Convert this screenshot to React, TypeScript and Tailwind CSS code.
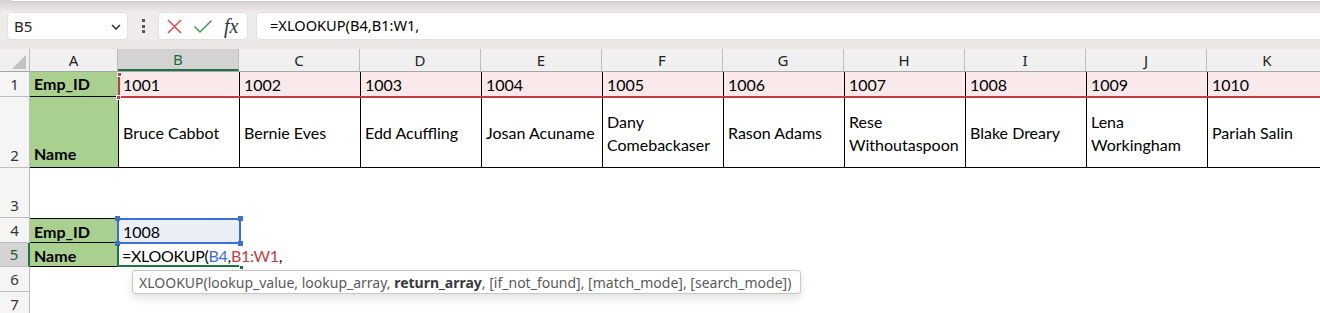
import React from 'react';

const COLS = ['B', 'C', 'D', 'E', 'F', 'G', 'H', 'I', 'J', 'K'];
const IDS = ['1001', '1002', '1003', '1004', '1005', '1006', '1007', '1008', '1009', '1010'];
const NAMES = [
  'Bruce Cabbot',
  'Bernie Eves',
  'Edd Acuffling',
  'Josan Acuname',
  'Dany Comebackaser',
  'Rason Adams',
  'Rese Withoutaspoon',
  'Blake Dreary',
  'Lena Workingham',
  'Pariah Salin',
];

const cellFont = "font-['Lato'] text-[16px] text-black";
const uiFont = "font-['Noto_Sans']";

function RowHead({ n, selected }: { n: number; selected?: boolean }) {
  return (
    <div
      className={`w-[30px] shrink-0 flex items-end justify-center pb-[1px] border-b border-r border-[#bdbdbd] ${uiFont} text-[15px] ${
        selected ? 'bg-[#d4d4d4] text-[#1e5e37] border-r-2 border-r-[#217346]' : 'bg-[#f5f5f5] text-[#333]'
      }`}
    >
      {n}
    </div>
  );
}

function Handle({ className }: { className: string }) {
  return <div className={`absolute w-[5px] h-[5px] ${className}`} />;
}

function FormulaBar() {
  return (
    <div className="flex items-stretch h-[29px] bg-[#efebeb] pt-[1px]">
      <div className={`ml-[7px] w-[121px] bg-white rounded-[4px] border border-[#e4e0e0] flex items-center justify-between pl-[6px] pr-[6px] ${uiFont} text-[15px] text-[#222]`}>
        <span>B5</span>
        <svg width="10" height="6" viewBox="0 0 10 6" className="mt-[2px]">
          <path d="M1 1l4 4 4-4" fill="none" stroke="#333" strokeWidth="1.6" />
        </svg>
      </div>
      <div className="w-[30px] flex flex-col items-center justify-center gap-[2.5px]">
        <span className="w-[3px] h-[3px] bg-[#555]" />
        <span className="w-[3px] h-[3px] bg-[#555]" />
        <span className="w-[3px] h-[3px] bg-[#555]" />
      </div>
      <div className="w-[90px] bg-white rounded-[4px] border border-[#e4e0e0] flex items-center pl-[7px] gap-[10px]">
        <svg width="17" height="17" viewBox="0 0 17 17">
          <path d="M2 2l13 13M15 2L2 15" stroke="#e5484d" strokeWidth="1.5" />
        </svg>
        <svg width="20" height="16" viewBox="0 0 20 16">
          <path d="M1.5 8.5l5.5 5.5L18.5 2.5" fill="none" stroke="#3f9a55" strokeWidth="1.5" />
        </svg>
        <span className="font-['Liberation_Serif'] italic text-[20px] leading-none text-[#333] ml-[1px]">fx</span>
      </div>
      <div className={`ml-[8px] flex-1 bg-white rounded-l-[4px] border border-r-0 border-[#e4e0e0] flex items-center pl-[13px] ${uiFont} text-[14.6px] text-black`}>
        =XLOOKUP(B4,B1:W1,
      </div>
    </div>
  );
}

function ColumnHeaders() {
  return (
    <div className={`flex h-[23px] bg-[#f0f0f0] border-b border-[#a6a6a6] ${uiFont} text-[15px] text-[#222]`}>
      <div className="w-[30px] shrink-0 relative border-r border-[#bdbdbd]">
        <svg width="14" height="14" viewBox="0 0 14 14" className="absolute right-[3px] bottom-[2px]">
          <path d="M14 0V14H0Z" fill="#c2c2c2" />
        </svg>
      </div>
      <div className="w-[88px] shrink-0 flex items-center justify-center border-r border-[#bdbdbd]">A</div>
      {COLS.map((c) => (
        <div
          key={c}
          className={`w-[121px] shrink-0 flex items-center justify-center border-r border-[#bdbdbd] ${
            c === 'B' ? 'bg-[#d3d3d3] text-[#1e6b3c] border-b-2 border-b-[#217346]' : ''
          }`}
        >
          {c}
        </div>
      ))}
    </div>
  );
}

export default function App() {
  return (
    <div className="w-[1320px] h-[313px] overflow-hidden relative bg-white">
      <div className="h-[11px] bg-gradient-to-b from-[#d6d1d1] to-[#ebe7e7]">
        <div className="ml-[11px] h-[2px] bg-white border-b border-[#cfcaca] rounded-bl-[3px]" />
      </div>
      <FormulaBar />
      <div className="h-[9px] bg-[#ebe6e6]" />
      <ColumnHeaders />

      {/* row 1 */}
      <div className="flex h-[25px]">
        <RowHead n={1} />
        <div className={`w-[88px] shrink-0 bg-[#a9d08e] border-b border-black flex items-end pl-[4px] font-bold ${cellFont}`}>
          Emp_ID
        </div>
        {IDS.map((id, i) => (
          <div
            key={id}
            className={`w-[121px] shrink-0 relative bg-[#f9e9ea] border-l border-black flex items-end pl-[4px] ${cellFont}`}
          >
            {id}
            <div className="absolute left-[-1px] right-[-1px] bottom-[-1px] h-[2px] bg-[#c23b45]" />
            {i === 0 && (
              <>
                <div className="absolute left-[-1px] top-0 bottom-[-1px] w-[2px] bg-[#c23b45]" />
                <Handle className="left-[-2px] top-0 h-[4px] bg-[#c23b45] border border-white" />
                <Handle className="left-[-3px] bottom-[-3px] bg-[#c23b45] border border-white" />
              </>
            )}
          </div>
        ))}
      </div>

      {/* row 2 */}
      <div className="flex h-[71px]">
        <RowHead n={2} />
        <div className={`w-[88px] shrink-0 bg-[#a9d08e] border-b border-black flex items-end pb-[1px] pl-[4px] font-bold ${cellFont}`}>
          Name
        </div>
        {NAMES.map((name) => (
          <div
            key={name}
            className={`w-[121px] shrink-0 border-l border-b border-black flex items-center pl-[4px] pr-[2px] pt-[1px] leading-[23px] ${cellFont}`}
          >
            {name}
          </div>
        ))}
      </div>

      {/* row 3 */}
      <div className="flex h-[50px]">
        <RowHead n={3} />
      </div>

      {/* row 4 */}
      <div className="flex h-[25px]">
        <RowHead n={4} />
        <div className={`w-[88px] shrink-0 bg-[#a9d08e] border-y border-black flex items-center pt-[3px] pl-[4px] font-bold ${cellFont}`}>
          Emp_ID
        </div>
        <div className={`w-[122px] shrink-0 relative bg-[#e9eef7] flex items-center pt-[3px] pl-[5px] ${cellFont}`}>
          1008
          <div className="absolute inset-[0_-1px_-1px_-1px] border-2 border-[#3c6fd4]" />
          <Handle className="left-[-3px] top-[-2px] bg-[#3c6fd4]" />
          <Handle className="right-[-3px] top-[-2px] bg-[#3c6fd4]" />
          <Handle className="left-[-3px] bottom-[-3px] bg-[#3c6fd4]" />
          <Handle className="right-[-3px] bottom-[-3px] bg-[#3c6fd4]" />
        </div>
      </div>

      {/* row 5 */}
      <div className="flex h-[24px]">
        <RowHead n={5} selected />
        <div className={`w-[88px] shrink-0 bg-[#a9d08e] border-b border-black flex items-center pt-[2px] pl-[4px] font-bold ${cellFont}`}>
          Name
        </div>
        <div className={`w-[122px] shrink-0 relative flex items-center pt-[1px] pl-[4px] whitespace-nowrap z-10 ${cellFont} text-[15px] tracking-[-0.3px]`}>
          <span>=XLOOKUP(</span>
          <span className="text-[#3c6fd4]">B4</span>
          <span>,</span>
          <span className="text-[#c23b45]">B1:W1</span>
          <span>,</span>
          <span className="w-[1px] h-[18px] bg-black ml-[1px]" />
          <div className="absolute left-[-1px] top-[1px] w-[2px] bottom-0 bg-[#217346]" />
          <div className="absolute left-[-1px] right-[-1px] bottom-0 h-[2px] bg-[#217346]" />
          <Handle className="right-[-4px] bottom-[-3px] bg-[#217346] border border-white" />
        </div>
      </div>

      {/* row 6 */}
      <div className="flex h-[25px]">
        <RowHead n={6} />
      </div>

      {/* row 7 */}
      <div className="flex h-[25px]">
        <RowHead n={7} />
      </div>

      <div className={`absolute left-[132px] top-[270px] w-[669px] h-[24px] bg-white border border-[#c8c8c8] rounded-[3px] shadow-[0_4px_8px_rgba(0,0,0,0.12)] flex items-center pl-[6px] whitespace-nowrap ${uiFont} text-[14px] text-[#5a5a5a] z-20`}>
        XLOOKUP(lookup_value, lookup_array,&nbsp;<b className="text-[#3a3a3a]">return_array</b>, [if_not_found], [match_mode], [search_mode])
      </div>
    </div>
  );
}
